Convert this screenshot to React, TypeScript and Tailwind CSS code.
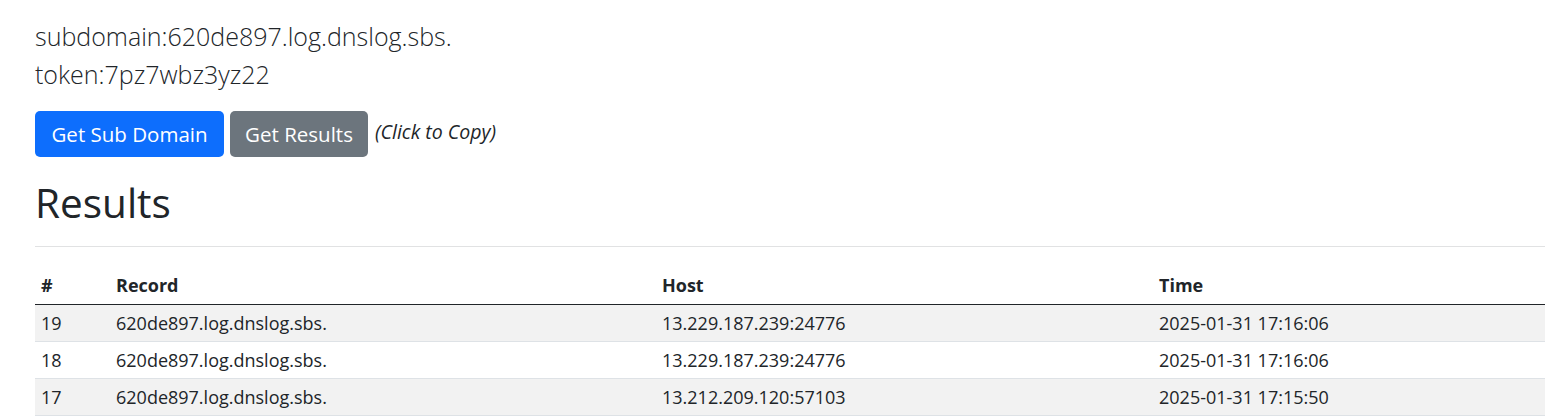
import { useState } from 'react';

type Row = { id: number; record: string; host: string; time: string };

const rows: Row[] = [
  { id: 19, record: '620de897.log.dnslog.sbs.', host: '13.229.187.239:24776', time: '2025-01-31 17:16:06' },
  { id: 18, record: '620de897.log.dnslog.sbs.', host: '13.229.187.239:24776', time: '2025-01-31 17:16:06' },
  { id: 17, record: '620de897.log.dnslog.sbs.', host: '13.212.209.120:57103', time: '2025-01-31 17:15:50' },
];

export default function App() {
  const [subdomain] = useState('620de897.log.dnslog.sbs.');
  const [token] = useState('7pz7wbz3yz22');

  return (
    <div
      className="min-h-screen bg-white pl-[35px] pt-[17px] text-[#212529]"
      style={{ fontFamily: '"Open Sans", "Noto Sans", sans-serif' }}
    >
      <div className="text-[25px] font-light leading-[38px]">subdomain:{subdomain}</div>
      <div className="text-[25px] font-light leading-[38px]">token:{token}</div>

      <div className="mt-[18px] flex items-center">
        <button className="h-[46px] w-[189px] rounded-[5px] bg-[#0d6efd] text-[20.5px] text-white">
          Get Sub Domain
        </button>
        <button className="ml-[6px] h-[46px] w-[138px] rounded-[5px] bg-[#6c757d] text-[20.5px] text-white">
          Get Results
        </button>
        <i className="ml-[7px] -mt-[4px] text-[19.5px]">(Click to Copy)</i>
      </div>

      <h1 className="mt-[22px] text-[40.5px] font-normal leading-[48px]">Results</h1>
      <hr className="mt-[19px] border-t border-[#e1e2e3]" />

      <table className="mt-[19px] w-full border-collapse text-[18px]">
        <thead>
          <tr className="border-b border-[#212529]">
            <th className="w-[75px] px-[6px] py-[7px] text-left font-bold leading-[24px]">#</th>
            <th className="w-[546px] px-[6px] py-[7px] text-left font-bold leading-[24px]">Record</th>
            <th className="w-[497px] px-[6px] py-[7px] text-left font-bold leading-[24px]">Host</th>
            <th className="px-[6px] py-[7px] text-left font-bold leading-[24px]">Time</th>
          </tr>
        </thead>
        <tbody>
          {rows.map((r, i) => (
            <tr key={r.id} className={`border-b border-[#dee2e6] ${i % 2 === 0 ? 'bg-[#f2f2f2]' : 'bg-white'}`}>
              <td className="px-[6px] py-[6px] leading-[24px]">{r.id}</td>
              <td className="px-[6px] py-[6px] leading-[24px]">{r.record}</td>
              <td className="px-[6px] py-[6px] leading-[24px]">{r.host}</td>
              <td className="px-[6px] py-[6px] leading-[24px]">{r.time}</td>
            </tr>
          ))}
        </tbody>
      </table>
    </div>
  );
}
